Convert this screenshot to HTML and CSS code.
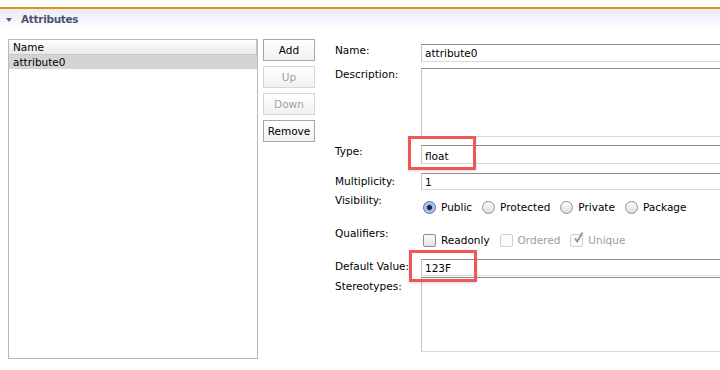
FILE: index.html
```html
<!DOCTYPE html>
<html>
<head>
<meta charset="utf-8">
<link rel="stylesheet" href="styles.css">
</head>
<body>
<div class="section">
  <div class="section-head"><span class="twisty"></span><span class="title">Attributes</span></div>
  <div class="section-body">
    <div class="list">
      <div class="list-head">Name</div>
      <div class="list-row selected">attribute0</div>
    </div>
    <div class="buttons">
      <div class="btn">Add</div>
      <div class="btn disabled">Up</div>
      <div class="btn disabled">Down</div>
      <div class="btn">Remove</div>
    </div>
    <div class="form">
      <div class="row r-name"><div class="label">Name:</div><div class="field f-name">attribute0</div></div>
      <div class="row r-desc"><div class="label">Description:</div><div class="field area f-desc"></div></div>
      <div class="row r-type"><div class="label">Type:</div><div class="field f-type">float</div></div>
      <div class="row r-mult"><div class="label l-mult">Multiplicity:</div><div class="field f-mult">1</div></div>
      <div class="row r-vis"><div class="label">Visibility:</div>
        <div class="choices">
          <span class="choice"><span class="radio on"></span>Public</span>
          <span class="choice"><span class="radio"></span>Protected</span>
          <span class="choice"><span class="radio"></span>Private</span>
          <span class="choice"><span class="radio"></span>Package</span>
        </div>
      </div>
      <div class="row r-qual"><div class="label">Qualifiers:</div>
        <div class="choices">
          <span class="choice"><span class="check"></span>Readonly</span>
          <span class="choice dim"><span class="check off"></span>Ordered</span>
          <span class="choice dim"><span class="check off"><svg width="12" height="12" viewBox="0 0 12 12"><path d="M3 6.5 L5.2 9.5 L10.5 0.5" fill="none" stroke="#8d8d8d" stroke-width="1.6"/></svg></span>Unique</span>
        </div>
      </div>
      <div class="row r-def"><div class="label l-def">Default Value:</div><div class="field f-def">123F</div></div>
      <div class="row r-ster"><div class="label l-ster">Stereotypes:</div><div class="field area f-ster"></div></div>
    </div>
    <div class="mark mark-type"></div>
    <div class="mark mark-def"></div>
  </div>
</div>
</body>
</html>
```

FILE: styles.css
```css
html, body {
  margin: 0;
  padding: 0;
  background: #ffffff;
  overflow: hidden;
  width: 720px;
  height: 370px;
}
body {
  font-family: "DejaVu Sans", "Lucida Grande", sans-serif;
  font-size: 10.5px;
  color: #000;
  padding-top: 7px;
  box-sizing: border-box;
}
.section-head {
  border-top: 2px solid #e8901c;
  height: 20px;
  background: linear-gradient(#e8eaf7, #ffffff);
  display: flex;
  align-items: center;
  padding-left: 6px;
}
.twisty {
  width: 0;
  height: 0;
  border-left: 3.5px solid transparent;
  border-right: 3.5px solid transparent;
  border-top: 4px solid #5a5e78;
  margin-right: 9px;
  margin-top: 1px;
}
.title {
  font-weight: bold;
  color: #4d5170;
  font-size: 10.5px;
  letter-spacing: -0.3px;
}
.section-body {
  position: relative;
  display: flex;
  align-items: flex-start;
  padding: 10px 0 0 8px;
  width: 720px;
  box-sizing: border-box;
}
.list {
  flex: none;
  width: 248px;
  height: 318px;
  border: 1px solid #b8b8b8;
  background: #fff;
}
.list-head {
  height: 14px;
  line-height: 14px;
  padding-left: 4px;
  background: linear-gradient(#ffffff, #e9e9e9);
  border-bottom: 1px solid #c9c9c9;
  border-right: 1px solid #c9c9c9;
}
.list-row {
  height: 14px;
  line-height: 14px;
  padding-left: 4px;
}
.list-row.selected {
  background: #d4d4d4;
}
.buttons {
  flex: none;
  display: flex;
  flex-direction: column;
  gap: 5px;
  margin-left: 5px;
}
.btn {
  width: 50px;
  height: 20px;
  line-height: 20px;
  text-align: center;
  border: 1px solid #a6a6a6;
  background: linear-gradient(#ffffff, #f1f1f1);
}
.btn.disabled {
  color: #a0a0a0;
  border-color: #d6d6d6;
}
.form {
  flex: none;
  margin-left: 20px;
  padding-top: 5px;
  display: flex;
  flex-direction: column;
}
.row {
  display: flex;
  align-items: flex-start;
}
.label {
  width: 86px;
  flex: none;
  line-height: 13px;
  white-space: nowrap;
}
.field {
  width: 299px;
  flex: none;
  box-sizing: border-box;
  border: 1px solid #c3c3c3;
  border-right: none;
  border-top-color: #8c8c8c;
  border-bottom-color: #d9d9d9;
  padding-left: 3px;
  background: #fff;
  white-space: nowrap;
}
.f-name { height: 18px; line-height: 16px; }
.r-desc { margin-top: 6px; }
.f-desc { height: 69px; }
.r-type { margin-top: 8px; }
.f-type { height: 19px; line-height: 21px; }
.r-mult { margin-top: 9px; }
.l-mult { padding-top: 2px; }
.f-mult { height: 17px; line-height: 17px; }
.r-vis { margin-top: 4px; }
.r-qual { margin-top: 13px; }
.r-def { margin-top: 12px; }
.l-def { padding-top: 1px; }
.f-def { height: 17px; line-height: 16px; }
.r-ster { margin-top: 1px; }
.l-ster { padding-top: 3px; }
.f-ster { height: 75px; }
.choices {
  display: flex;
  gap: 10px;
  margin-top: 7px;
  margin-left: 2px;
  line-height: 13px;
}
.choice {
  display: flex;
  align-items: center;
  gap: 5px;
  white-space: nowrap;
}
.choice.dim { color: #9d9d9d; }
.radio {
  width: 11px;
  height: 11px;
  border-radius: 50%;
  border: 1px solid #8e8e8e;
  background: linear-gradient(#fdfdfd, #dcdcdc);
  box-sizing: content-box;
  position: relative;
}
.radio.on {
  border-color: #5a6d92;
  background: radial-gradient(circle at 50% 50%, #1d2a4a 0, #1d2a4a 2.2px, #8fb4e6 2.8px, #cfe0f6 100%);
}
.check {
  width: 11px;
  height: 11px;
  border: 1px solid #8e8e8e;
  border-radius: 2px;
  background: linear-gradient(#fdfdfd, #e2e2e2);
  position: relative;
}
.check.off {
  border-color: #cfcfcf;
  background: #fbfbfb;
}
.check svg {
  position: absolute;
  left: 1px;
  top: -3px;
}
.mark {
  position: absolute;
  border: 3px solid #f05656;
  box-shadow: 0 1px 2px rgba(0,0,0,0.15);
}
.mark-type {
  left: 408px;
  top: 107px;
  width: 62px;
  height: 28px;
}
.mark-def {
  left: 409px;
  top: 221px;
  width: 62px;
  height: 26px;
}
```
